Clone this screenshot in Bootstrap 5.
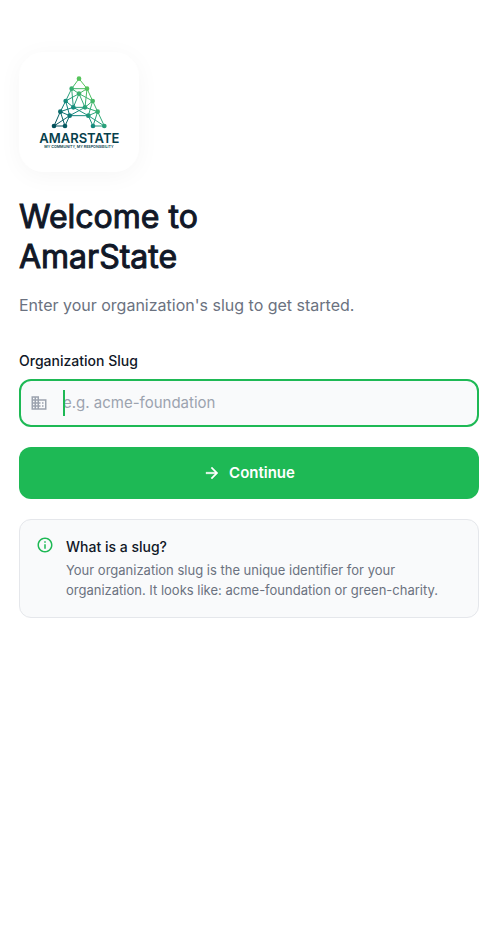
<!DOCTYPE html>
<html lang="en">
<head>
<meta charset="utf-8">
<meta name="viewport" content="width=device-width, initial-scale=1">
<title>Welcome to AmarState</title>
<link href="https://cdn.jsdelivr.net/npm/bootstrap@5.3.0/dist/css/bootstrap.min.css" rel="stylesheet">
<style>
  body { font-family: Inter, sans-serif; color: #111827; background: #fff; }
  .welcome { max-width: 520px; padding: 52px 15px 24px 19px; }
  .logo-tile { width: 120px; height: 120px; border-radius: 24px; box-shadow: 0 4px 24px rgba(0, 0, 0, .04); margin-bottom: 25px; }
  .headline { font-size: 32px; line-height: 40px; font-weight: 400; -webkit-text-stroke: 1px currentColor; max-width: 240px; margin-bottom: 16px; }
  .intro { font-size: 16px; line-height: 24px; color: #6b7280; margin-bottom: 34px; }
  .slug-label { font-size: 14px; line-height: 20px; font-weight: 500; margin-bottom: 8px; }
  .slug-box { height: 48px; border: 2px solid #1eb955; border-radius: 12px; background: #f9fafb; }
  .slug-icon { width: 42px; padding-left: 9px; }
  .slug-field { font-size: 15px; line-height: 24px; color: #111827; caret-color: #1eb955; }
  .slug-field::placeholder { color: #9ca3af; opacity: 1; }
  .slug-caret { width: 2px; height: 26px; background: #1eb955; left: 0; top: 9px; }
  .btn-continue { --bs-btn-bg: #1eb955; --bs-btn-color: #fff; --bs-btn-hover-bg: #1aa64c; --bs-btn-hover-color: #fff; --bs-btn-active-bg: #178f42; --bs-btn-active-color: #fff; height: 52px; border: 0; border-radius: 12px; font-size: 15px; font-weight: 600; margin: 20px 0; }
  .hint { border: 1px solid #e5e7eb; border-radius: 12px; background: #f9fafb; padding: 16px 16px 17px; }
  .hint-icon { margin-right: 12px; }
  .hint-title { font-size: 14px; line-height: 20px; font-weight: 500; margin: 1px 0 3px; }
  .hint-text { font-size: 13px; line-height: 20px; color: #6b7280; }
</style>
<script src="https://cdn.jsdelivr.net/npm/bootstrap@5.3.0/dist/js/bootstrap.bundle.min.js" defer></script>
</head>
<body>
<main class="welcome">
  <div class="logo-tile bg-white">
    <svg class="d-block w-100 h-100" viewBox="-33 -39 360 360" role="img" aria-label="AmarState logo">
      <defs>
        <linearGradient id="net" gradientUnits="userSpaceOnUse" x1="85" y1="180" x2="178" y2="75">
          <stop offset="0" stop-color="#03505b"/><stop offset=".45" stop-color="#12877f"/><stop offset=".7" stop-color="#2fa878"/><stop offset="1" stop-color="#56c45b"/>
        </linearGradient>
      </defs>
      <g fill="none" stroke="url(#net)" stroke-width="3">
        <path d="M147 41L125 71L107 108L91 140L72 183M147 41L171 71L188 108L203 140L223 183"/>
        <path d="M125 71H171L147 86L125 71L130 127L147 86L165 127L171 71M147 86L107 108L130 127L91 140L119 152L107 108M147 86L188 108L165 127L203 140L175 152L188 108"/>
        <path d="M130 127H165L119 152H175L130 127M91 140L105 183H72L119 152L105 183M203 140L189 183H223L175 152L189 183"/>
      </g>
      <g fill="url(#net)">
        <circle cx="147" cy="41" r="7"/><circle cx="125" cy="71" r="7"/><circle cx="171" cy="71" r="7"/><circle cx="147" cy="86" r="7"/>
        <circle cx="107" cy="108" r="7"/><circle cx="188" cy="108" r="7"/><circle cx="130" cy="127" r="7"/><circle cx="165" cy="127" r="7"/>
        <circle cx="91" cy="140" r="7"/><circle cx="203" cy="140" r="7"/><circle cx="119" cy="152" r="7"/><circle cx="175" cy="152" r="7"/>
        <circle cx="72" cy="183" r="7"/><circle cx="105" cy="183" r="7"/><circle cx="189" cy="183" r="7"/><circle cx="223" cy="183" r="7"/>
      </g>
      <g fill="#073f4c" text-anchor="middle" font-family="Inter, sans-serif" font-weight="600">
        <text x="148" y="233" font-size="39">AMARSTATE</text>
        <text x="147" y="248" font-size="11">MY COMMUNITY, MY RESPONSIBILITY</text>
      </g>
    </svg>
  </div>

  <h1 class="headline">Welcome to AmarState</h1>
  <p class="intro">Enter your organization's slug to get started.</p>

  <form>
    <label class="slug-label d-block" for="slug">Organization Slug</label>
    <div class="slug-box d-flex align-items-stretch">
      <span class="slug-icon d-flex align-items-center flex-shrink-0">
        <svg width="18" height="18" viewBox="0 0 24 24" fill="#9ca3af" aria-hidden="true"><path d="M12 7V3H2v18h20V7H12zM6 19H4v-2h2v2zm0-4H4v-2h2v2zm0-4H4V9h2v2zm0-4H4V5h2v2zm4 12H8v-2h2v2zm0-4H8v-2h2v2zm0-4H8V9h2v2zm0-4H8V5h2v2zm10 12h-8v-2h2v-2h-2v-2h2v-2h-2V9h8v10zm-2-8h-2v2h2v-2zm0 4h-2v2h2v-2z"/></svg>
      </span>
      <div class="position-relative flex-grow-1 d-flex">
        <input class="slug-field form-control border-0 bg-transparent shadow-none p-0" type="text" id="slug" placeholder="e.g. acme-foundation" autocomplete="off">
        <span class="slug-caret position-absolute" aria-hidden="true"></span>
      </div>
    </div>
    <button class="btn btn-continue w-100 d-flex align-items-center justify-content-center gap-2" type="submit">
      <svg width="18" height="18" viewBox="0 0 24 24" fill="currentColor" stroke="currentColor" stroke-width=".5" aria-hidden="true"><path d="M12 4l-1.410 1.410L16.170 11H4v2h12.170l-5.580 5.590L12 20l8-8z"/></svg>
      Continue
    </button>
  </form>

  <section class="hint d-flex align-items-start">
    <svg class="hint-icon flex-shrink-0" width="18" height="18" viewBox="0 0 24 24" fill="#1eb955" aria-hidden="true"><path d="M11 7h2v2h-2zm0 4h2v6h-2zm1-9C6.480 2 2 6.480 2 12s4.480 10 10 10 10-4.480 10-10S17.520 2 12 2zm0 18c-4.410 0-8-3.590-8-8s3.590-8 8-8 8 3.590 8 8-3.590 8-8 8z"/></svg>
    <div>
      <h2 class="hint-title">What is a slug?</h2>
      <p class="hint-text mb-0">Your organization slug is the unique identifier for your organization. It looks like: acme-foundation or green-charity.</p>
    </div>
  </section>
</main>
</body>
</html>
